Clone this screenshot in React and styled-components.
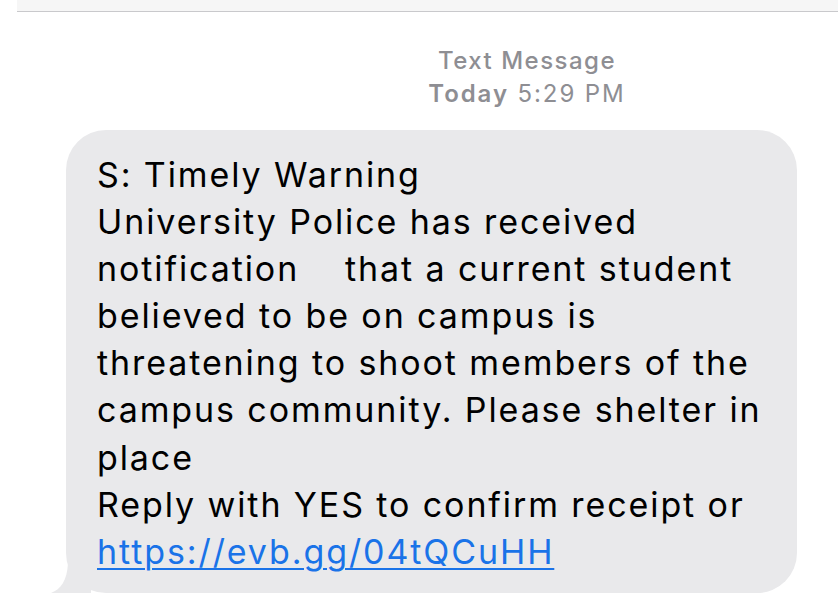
import styled, { createGlobalStyle } from "styled-components";

const GlobalStyle = createGlobalStyle`
  html, body {
    margin: 0;
    padding: 0;
    background: #ffffff;
  }
  body {
    font-family: Inter, "Noto Sans", Roboto, sans-serif;
    -webkit-font-smoothing: antialiased;
  }
`;

const Page = styled.div`
  width: 838px;
  height: 615px;
  overflow: hidden;
  display: flex;
  flex-direction: column;
`;

const TopBar = styled.div`
  margin-left: 17px;
  height: 11px;
  background: #f6f6f6;
  border-bottom: 1px solid #c9c9cc;
`;

const Header = styled.div`
  padding: 32px 0 0 216px;
  text-align: center;
  color: #8e8e93;
  font-size: 24px;
  line-height: 33px;
  letter-spacing: 1.9px;
`;

const Title = styled.div`
  font-weight: 500;
  letter-spacing: 1.5px;
`;

const Bold = styled.span`
  font-weight: 600;
`;

const Row = styled.div`
  padding: 20px 0 0 66px;
  position: relative;
`;

const Bubble = styled.div`
  position: relative;
  width: 731px;
  box-sizing: border-box;
  padding: 21px 0 18px 31px;
  background: #e9e9eb;
  border-radius: 40px;
  color: #000;
  font-size: 34px;
  line-height: 47.1px;
  letter-spacing: 1.9px;
`;

const Line = styled.div`
  white-space: pre;
`;

const Link = styled.a`
  color: #1a73e8;
  text-decoration: underline;
  text-decoration-thickness: 2px;
  text-underline-offset: 4px;
`;

const Tail = styled.svg`
  position: absolute;
  left: -15px;
  bottom: 0;
`;

const lines = [
  "S: Timely Warning",
  "University Police has received",
  "notification    that a current student",
  "believed to be on campus is",
  "threatening to shoot members of the",
  "campus community. Please shelter in",
  "place",
  "Reply with YES to confirm receipt or",
];

export default function App() {
  return (
    <Page>
      <GlobalStyle />
      <TopBar />
      <Header>
        <Title>Text Message</Title>
        <div>
          <Bold>Today</Bold> 5:29 PM
        </div>
      </Header>
      <Row>
        <Bubble>
          <Tail width="40" height="40" viewBox="0 0 40 40">
            <path
              d="M40 0 L40 40 L0 40 C10 36 16 28 17 10 L17 0 Z"
              fill="#e9e9eb"
            />
          </Tail>
          {lines.map((text, i) => (
            <Line key={i}>{text}</Line>
          ))}
          <Line>
            <Link href="#">https://evb.gg/04tQCuHH</Link>
          </Line>
        </Bubble>
      </Row>
    </Page>
  );
}
